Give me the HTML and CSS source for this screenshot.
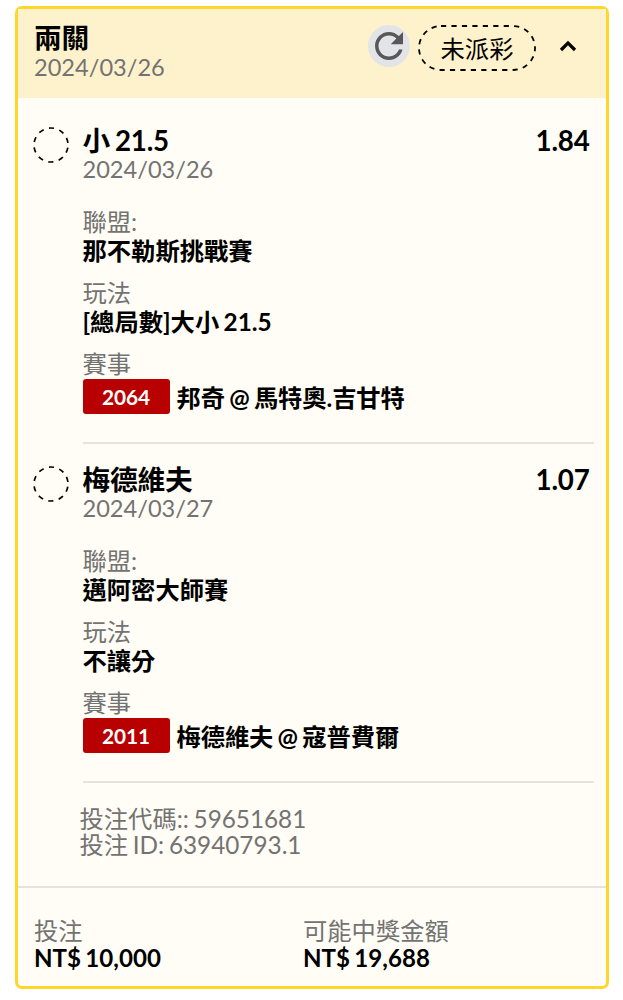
FILE: index.html
```html
<!DOCTYPE html>
<html lang="zh-Hant">
<head>
  <meta charset="UTF-8" />
  <title>投注紀錄</title>
  <meta name="viewport" content="width=device-width, initial-scale=1.0" />
  <link rel="stylesheet" href="styles.css">
</head>
<body>

  <div class="ticket">
    <div class="ticket-header">
      <div class="ticket-name">
        <h1>兩關</h1>
        <div class="date">2024/03/26</div>
      </div>
      <button class="refresh" aria-label="refresh">
        <svg width="42" height="42" viewBox="0 0 24 24">
          <path d="M17.65 6.35C16.2 4.9 14.21 4 12 4c-4.42 0-7.99 3.58-7.99 8s3.57 8 7.99 8c3.73 0 6.84-2.55 7.73-6h-2.08c-.82 2.33-3.04 4-5.65 4-3.31 0-6-2.69-6-6s2.69-6 6-6c1.66 0 3.14.69 4.22 1.78L13 11h7V4l-2.35 2.35z" />
        </svg>
      </button>
      <div class="status">
        <svg class="status-outline" width="118" height="46" viewBox="0 0 118 46">
          <rect x="1" y="1" width="116" height="44" rx="22" />
        </svg>
        未派彩
      </div>
      <svg class="chevron" width="18" height="12" viewBox="0 0 18 12">
        <path d="M2 10 L9 3 L16 10" />
      </svg>
    </div>

    <div class="leg">
      <svg class="leg-icon" width="36" height="36" viewBox="0 0 36 36">
        <circle cx="18" cy="18" r="17" />
      </svg>
      <div class="leg-body">
        <div class="leg-title">
          <h2>小 21.5</h2>
          <span class="odds">1.84</span>
        </div>
        <div class="date">2024/03/26</div>
        <dl>
          <dt>聯盟:</dt>
          <dd>那不勒斯挑戰賽</dd>
          <dt>玩法</dt>
          <dd>[總局數]大小 21.5</dd>
          <dt>賽事</dt>
          <dd class="match"><span class="code">2064</span>邦奇 @ 馬特奧.吉甘特</dd>
        </dl>
      </div>
    </div>

    <div class="leg">
      <svg class="leg-icon" width="36" height="36" viewBox="0 0 36 36">
        <circle cx="18" cy="18" r="17" />
      </svg>
      <div class="leg-body">
        <div class="leg-title">
          <h2>梅德維夫</h2>
          <span class="odds">1.07</span>
        </div>
        <div class="date">2024/03/27</div>
        <dl>
          <dt>聯盟:</dt>
          <dd>邁阿密大師賽</dd>
          <dt>玩法</dt>
          <dd>不讓分</dd>
          <dt>賽事</dt>
          <dd class="match"><span class="code">2011</span>梅德維夫 @ 寇普費爾</dd>
        </dl>
      </div>
    </div>

    <div class="ids">
      <div>投注代碼:: 59651681</div>
      <div>投注 ID: 63940793.1</div>
    </div>

    <div class="ticket-footer">
      <div class="amount">
        <div class="label">投注</div>
        <div class="value">NT$ 10,000</div>
      </div>
      <div class="amount">
        <div class="label">可能中獎金額</div>
        <div class="value">NT$ 19,688</div>
      </div>
    </div>
  </div>

</body>
</html>
```
FILE: styles.css
```css
* {
  box-sizing: border-box;
}

body {
  font-family: Lato, 'Noto Sans CJK TC', sans-serif;
  font-size: 24.3px;
  line-height: 26px;
  word-spacing: -1.5px;
  color: #000;
  background: #fff;
  margin: 0;
  padding: 6px 14px 0 15px;
}

h1, h2, dl, dd {
  margin: 0;
}

.ticket {
  height: 983px;
  background: #fffdf5;
  border: 3px solid #ffd62b;
  border-radius: 7px;
}

.ticket-header {
  display: flex;
  align-items: flex-start;
  height: 89px;
  padding: 16px 29px 0 16px;
  background: #fef2cc;
}

.ticket-name {
  flex: 1;
  margin-top: -1px;
}

h1, h2, .odds {
  font-size: 27.7px;
  line-height: 28px;
  font-weight: 700;
  letter-spacing: -0.2px;
}

.date {
  color: #737373;
  font-size: 23.6px;
  line-height: 30px;
}

.refresh {
  width: 42px;
  height: 42px;
  padding: 0;
  border: none;
  border-radius: 50%;
  background: #e3e4e8;
}

.refresh svg {
  display: block;
  fill: #58585a;
}

.status {
  position: relative;
  width: 118px;
  height: 46px;
  margin-left: 8px;
  line-height: 47px;
  text-align: center;
}

.status-outline {
  position: absolute;
  left: 0;
  top: 0;
}

.status-outline rect {
  fill: none;
  stroke: #000;
  stroke-width: 1.8;
  stroke-dasharray: 5.2 5.25;
}

.chevron {
  margin: 15px 0 0 23px;
}

.chevron path {
  fill: none;
  stroke: #000;
  stroke-width: 3.2;
}

.leg {
  display: flex;
  gap: 13.5px;
  height: 339px;
  padding: 29px 12.5px 0 15px;
}

.leg-icon {
  flex: none;
}

.leg-icon circle {
  fill: none;
  stroke: #000;
  stroke-width: 1.7;
  stroke-dasharray: 5.2 5.48;
  stroke-dashoffset: 7.94;
}

.leg-body {
  flex: 1;
  height: 317px;
  border-bottom: 2px solid #e6e3dd;
}

.leg-title {
  display: flex;
  justify-content: space-between;
  margin-bottom: -1px;
  padding-right: 4px;
}

.leg-body dl {
  margin-top: 23px;
  line-height: 30px;
}

.leg-body dt {
  color: #737373;
}

.leg-body dd {
  font-weight: 700;
  margin: -1px 0 12px;
}

.leg-body .match {
  display: flex;
  align-items: flex-start;
  height: 35px;
  line-height: 38px;
  margin: 0;
  letter-spacing: -0.1px;
}

.code {
  width: 87px;
  height: 35px;
  margin-right: 7px;
  border-radius: 3px;
  background: #b80000;
  color: #fff;
  font-size: 20.8px;
  line-height: 36px;
  text-align: center;
}

.ids {
  height: 110px;
  padding: 30px 0 0 61.5px;
  color: #737373;
}

.ticket-footer {
  display: flex;
  padding: 30px 16px 0;
  border-top: 2px solid #e6e3dd;
}

.amount {
  width: 269px;
}

.amount .label {
  color: #737373;
}

.amount .value {
  font-weight: 700;
  font-size: 24.1px;
  line-height: 28px;
}
```
